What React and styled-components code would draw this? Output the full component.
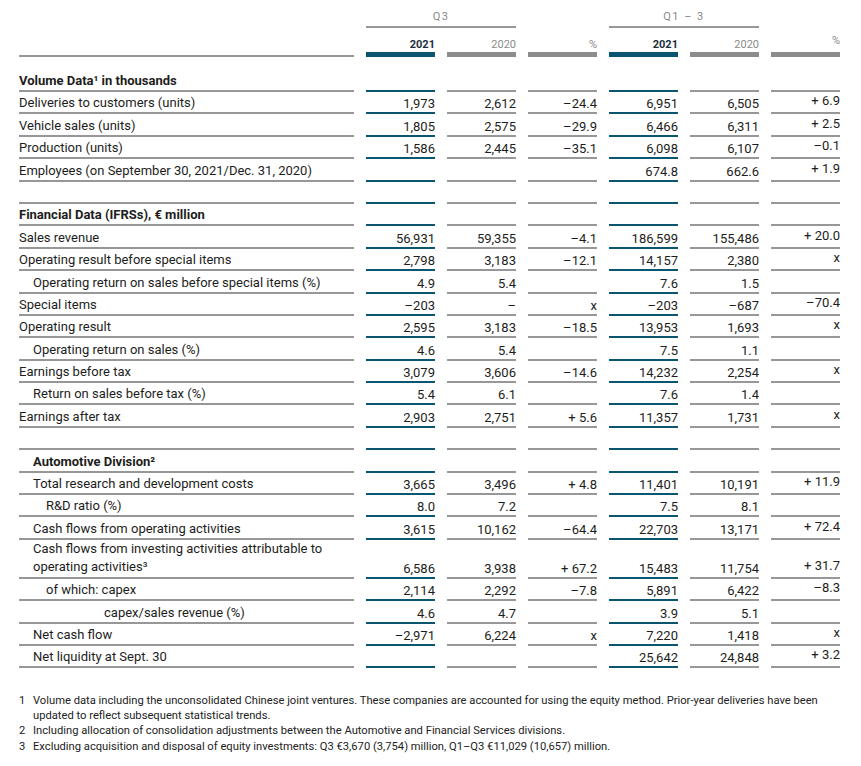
import React from "react";
import styled, { createGlobalStyle } from "styled-components";

const TEAL = "#0b5570";
const GRAY = "#979797";
const BAR_GRAY = "#8c8c8c";
const COLS = "335px repeat(6, 69px)";

const GlobalStyle = createGlobalStyle`
  body {
    margin: 0;
    background: #ffffff;
    font-family: Roboto, "Liberation Sans", sans-serif;
    color: #1d1d1b;
  }
`;

const rows = [
  { type: "title", label: "Volume Data¹ in thousands", height: 35 },
  { label: "Deliveries to customers (units)", v: ["1,973", "2,612", "–24.4", "6,951", "6,505", "+ 6.9"] },
  { label: "Vehicle sales (units)", v: ["1,805", "2,575", "–29.9", "6,466", "6,311", "+ 2.5"] },
  { label: "Production (units)", v: ["1,586", "2,445", "–35.1", "6,098", "6,107", "–0.1"] },
  { label: "Employees (on September 30, 2021/Dec. 31, 2020)", v: ["", "", "", "674.8", "662.6", "+ 1.9"] },
  { type: "blank" },
  { type: "title", label: "Financial Data (IFRSs), € million" },
  { label: "Sales revenue", v: ["56,931", "59,355", "–4.1", "186,599", "155,486", "+ 20.0"] },
  { label: "Operating result before special items", v: ["2,798", "3,183", "–12.1", "14,157", "2,380", "x"] },
  { label: "Operating return on sales before special items (%)", indent: 14, v: ["4.9", "5.4", "", "7.6", "1.5", ""] },
  { label: "Special items", v: ["–203", "–", "x", "–203", "–687", "–70.4"] },
  { label: "Operating result", v: ["2,595", "3,183", "–18.5", "13,953", "1,693", "x"] },
  { label: "Operating return on sales (%)", indent: 14, v: ["4.6", "5.4", "", "7.5", "1.1", ""] },
  { label: "Earnings before tax", v: ["3,079", "3,606", "–14.6", "14,232", "2,254", "x"] },
  { label: "Return on sales before tax (%)", indent: 14, v: ["5.4", "6.1", "", "7.6", "1.4", ""] },
  { label: "Earnings after tax", v: ["2,903", "2,751", "+ 5.6", "11,357", "1,731", "x"] },
  { type: "blank" },
  { type: "title", label: "Automotive Division²", indent: 14 },
  { label: "Total research and development costs", indent: 14, v: ["3,665", "3,496", "+ 4.8", "11,401", "10,191", "+ 11.9"] },
  { label: "R&D ratio (%)", indent: 27, v: ["8.0", "7.2", "", "7.5", "8.1", ""] },
  { label: "Cash flows from operating activities", indent: 14, v: ["3,615", "10,162", "–64.4", "22,703", "13,171", "+ 72.4"] },
  {
    label: "Cash flows from investing activities attributable to operating activities³",
    indent: 14,
    multi: true,
    v: ["6,586", "3,938", "+ 67.2", "15,483", "11,754", "+ 31.7"],
  },
  { label: "of which: capex", indent: 27, v: ["2,114", "2,292", "–7.8", "5,891", "6,422", "–8.3"] },
  { label: "capex/sales revenue (%)", indent: 85, v: ["4.6", "4.7", "", "3.9", "5.1", ""] },
  { label: "Net cash flow", indent: 14, v: ["–2,971", "6,224", "x", "7,220", "1,418", "x"] },
  { label: "Net liquidity at Sept. 30", indent: 14, v: ["", "", "", "25,642", "24,848", "+ 3.2"] },
];

const heads = ["2021", "2020", "%", "2021", "2020", "%"];

const notes = [
  "Volume data including the unconsolidated Chinese joint ventures. These companies are accounted for using the equity method. Prior-year deliveries have been updated to reflect subsequent statistical trends.",
  "Including allocation of consolidation adjustments between the Automotive and Financial Services divisions.",
  "Excluding acquisition and disposal of equity investments: Q3 €3,670 (3,754) million, Q1–Q3 €11,029 (10,657) million.",
];

// the Q3 and Q1-3 2021 columns carry the teal rules
const isAccent = (i) => i === 0 || i === 3;
// only the last % column sits a little higher
const isRaised = (i) => i === 5;

const App = () => {
  return (
    <>
      <GlobalStyle />
      <Page>
        <Row $height={28}>
          <Period $start={2}>Q3</Period>
          <Period $start={5}>Q1 – 3</Period>
        </Row>
        <Row $height={29}>
          <HeadLabel />
          {heads.map((h, i) => (
            <HeadCell key={i} $accent={isAccent(i)} $raised={isRaised(i)}>
              {h}
            </HeadCell>
          ))}
        </Row>
        {rows.map((r, idx) => (
          <Row key={idx} $height={r.height}>
            <Label $indent={r.indent} $bold={r.type === "title"} $multi={r.multi}>
              <span>{r.label}</span>
            </Label>
            {(r.v || ["", "", "", "", "", ""]).map((val, i) => (
              <Value key={i} $accent={isAccent(i)} $raised={isRaised(i)}>
                {val}
              </Value>
            ))}
          </Row>
        ))}
        <Notes>
          {notes.map((n, i) => (
            <Note key={i}>
              <span>{i + 1}</span>
              <span>{n}</span>
            </Note>
          ))}
        </Notes>
      </Page>
    </>
  );
};
export default App;

const Page = styled.div`
  padding-left: 19px;
  width: 821px;
`;

const Row = styled.div`
  display: grid;
  grid-template-columns: ${COLS};
  column-gap: 12px;
  min-height: ${(p) => p.$height || 22.4}px;
`;

const Period = styled.div`
  grid-column: ${(p) => p.$start} / span 2;
  display: flex;
  align-items: flex-end;
  justify-content: center;
  padding-bottom: 3px;
  border-bottom: 2px solid ${GRAY};
  font-size: 11px;
  line-height: 13px;
  letter-spacing: 1.5px;
  color: #8a8a8a;
`;

const HeadLabel = styled.div`
  border-bottom: 2px solid ${GRAY};
`;

const HeadCell = styled.div`
  display: flex;
  align-items: flex-end;
  justify-content: flex-end;
  padding-bottom: ${(p) => (p.$raised ? 5 : 1)}px;
  border-bottom: 5px solid ${(p) => (p.$accent ? TEAL : BAR_GRAY)};
  font-size: 11px;
  line-height: 13px;
  font-weight: ${(p) => (p.$accent ? 700 : 400)};
  color: ${(p) => (p.$accent ? "#1c2e3c" : "#8a8a8a")};
`;

const Label = styled.div`
  display: flex;
  align-items: flex-end;
  padding: 0 0 1px ${(p) => p.$indent || 0}px;
  border-bottom: 2px solid ${GRAY};
  font-size: 13px;
  line-height: ${(p) => (p.$multi ? 18 : 16)}px;
  font-weight: ${(p) => (p.$bold ? 700 : 400)};
`;

const Value = styled.div`
  display: flex;
  align-items: flex-end;
  justify-content: flex-end;
  padding-bottom: ${(p) => (p.$raised ? 3 : 0)}px;
  border-bottom: 2px solid ${(p) => (p.$accent ? TEAL : GRAY)};
  font-size: 13px;
  line-height: 16px;
  white-space: nowrap;
`;

const Notes = styled.ol`
  list-style: none;
  margin: 26px 0 0;
  padding: 0;
  font-size: 11.2px;
  line-height: 14.5px;
  color: #222;
`;

const Note = styled.li`
  display: grid;
  grid-template-columns: 14px 1fr;
  margin-bottom: 1px;
`;
